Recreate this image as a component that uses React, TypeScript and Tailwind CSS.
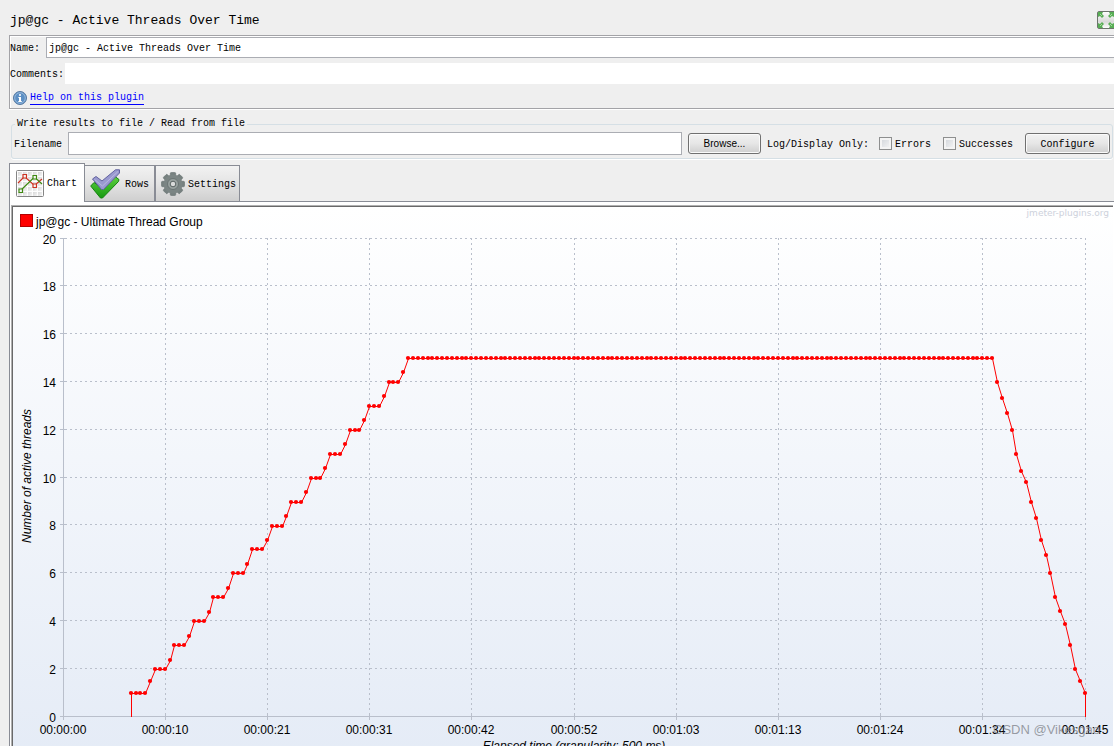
import React from "react";

const MONO = "font-['Liberation_Mono',monospace]";

const STEP = 1022 / 210;
const LEFT = 63;
const BASE = 717;
const UNIT = 23.93;

const rampDown = [14, 13.35, 12.7, 12, 11, 10.3, 9.8, 9, 8.3, 7.4, 6.75, 6, 5, 4.45, 3.9, 3, 2, 1.5, 1];

function threadCounts(): number[] {
  const values = [1, 1, 1, 1, 1.5];
  for (let n = 2; n < 15; n++) values.push(n, n, n, n + 0.4);
  while (values.length < 178) values.push(15);
  return values.concat(rampDown);
}

const points = threadCounts().map((v, i) => ({
  x: Math.floor(LEFT + (i + 14) * STEP + 0.01),
  y: Math.round(BASE - v * UNIT),
}));

const xTicks = [
  { x: 63.5, label: "00:00:00" },
  { x: 165.5, label: "00:00:10" },
  { x: 267.5, label: "00:00:21" },
  { x: 369.5, label: "00:00:31" },
  { x: 471.5, label: "00:00:42" },
  { x: 574.5, label: "00:00:52" },
  { x: 676.5, label: "00:01:03" },
  { x: 778.5, label: "00:01:13" },
  { x: 880.5, label: "00:01:24" },
  { x: 982.5, label: "00:01:34" },
  { x: 1085.5, label: "00:01:45" },
];

const yTicks = [0, 2, 4, 6, 8, 10, 12, 14, 16, 18, 20].map((v) => ({
  label: v,
  y: Math.floor(716 - v * 23.9) + 0.5,
}));

function ThreadsChart() {
  return (
    <svg
      viewBox="13 207 1100 560"
      className="block w-full font-['Liberation_Sans',Arial,sans-serif] text-[12px]"
      role="img"
      aria-label="Active threads over time"
    >
      <defs>
        <linearGradient id="sky" x1="0" y1="0" x2="0" y2="1">
          <stop offset="0" stopColor="#ffffff" />
          <stop offset="1" stopColor="#e4ebf6" />
        </linearGradient>
      </defs>
      <rect x="13" y="207" width="1100" height="560" fill="url(#sky)" />
      <rect x="20.5" y="214.5" width="12" height="12" fill="#ff0000" stroke="#b20000" />
      <text x="36" y="226" fill="#000">jp@gc - Ultimate Thread Group</text>
      <text x="1109" y="216" textAnchor="end" fill="#cdd1dc" className="font-['DejaVu_Sans',sans-serif] text-[9px]">
        jmeter-plugins.org
      </text>

      <g stroke="#b9bfcb" fill="none">
        {yTicks.slice(1).map((t) => (
          <g key={t.label}>
            <path d={`M60 ${t.y}H67`} />
            <path d={`M70 ${t.y}H1085`} strokeDasharray="2 3" />
          </g>
        ))}
        {xTicks.slice(1).map((t) => (
          <g key={t.label}>
            <path d={`M${t.x} 238V713`} strokeDasharray="2 3" />
            <path d={`M${t.x} 713V720`} />
          </g>
        ))}
        <path d="M60 716.5H1086M63.5 238V720" />
      </g>

      <g fill="#000">
        {yTicks.map((t) => (
          <text key={t.label} x="56" y={t.y + 5.5} textAnchor="end">{t.label}</text>
        ))}
        {xTicks.map((t) => (
          <text key={t.label} x={t.x - 0.5} y="734" textAnchor="middle">{t.label}</text>
        ))}
        <text x="574" y="750" textAnchor="middle" fontStyle="italic">Elapsed time (granularity: 500 ms)</text>
        <text transform="translate(31 476) rotate(-90)" textAnchor="middle" fontStyle="italic">
          Number of active threads
        </text>
      </g>

      <path d="M131.5 693V717M1085.5 693V717" stroke="#ff0000" />
      <polyline
        points={points.map((p) => `${p.x + 0.5},${p.y + 0.5}`).join(" ")}
        fill="none"
        stroke="#ff0000"
      />
      <g fill="#ff0000">
        {points.map((p, i) => (
          <circle key={i} cx={p.x} cy={p.y} r="2.1" />
        ))}
      </g>

      <text x="993" y="734" fill="#7c7f86" fillOpacity="0.75" className="text-[13px]">CSDN @Vikesgao</text>
    </svg>
  );
}

function ExpandIcon() {
  return (
    <svg width="17" height="18" viewBox="0 0 17 18">
      <defs>
        <linearGradient id="exp" x1="0" y1="0" x2="0" y2="1">
          <stop offset="0" stopColor="#fff" />
          <stop offset=".6" stopColor="#d9d9d9" />
          <stop offset="1" stopColor="#fff" />
        </linearGradient>
      </defs>
      <rect x=".5" y=".5" width="19" height="17" rx="1.5" fill="url(#exp)" stroke="#6c746c" />
      <g fill="#58ad55">
        <path d="M1 1h5L5 3l2 2-2 2-2-2-2 1zM17 1h-5l1 2-2 2 2 2 2-2 2 1zM1 17h5l-1-2 2-2-2-2-2 2-2-1zM17 17h-5l1-2-2-2 2-2 2 2 2-1z" />
      </g>
      <path d="M3 3L5 5M15 3L13 5M3 15L5 13M15 15L13 13" stroke="#a4d8a0" />
    </svg>
  );
}

function InfoIcon() {
  return (
    <svg width="14" height="14" viewBox="0 0 14 14">
      <circle cx="7" cy="7" r="6.5" fill="#5c8fc4" stroke="#56789f" />
      <circle cx="7" cy="7" r="5.3" fill="none" stroke="#a3c3e3" strokeWidth=".8" />
      <path d="M6 3.2h2v1.6H6zM5.4 6H8v4h.8v1H5.3v-1H6V7h-.6z" fill="#fff" />
    </svg>
  );
}

function ChartIcon() {
  return (
    <svg width="28" height="27" viewBox="0 0 28 27">
      <defs>
        <linearGradient id="paper" x1="0" y1="0" x2="1" y2="1">
          <stop offset="0" stopColor="#d6d6d6" />
          <stop offset="1" stopColor="#f6f6f6" />
        </linearGradient>
      </defs>
      <rect x=".5" y=".5" width="27" height="26" rx="1" fill="#fdfdfd" stroke="#858585" />
      <g fill="url(#paper)">
        {[2, 7, 12, 17, 22].map((y) => [2, 7, 12, 17, 22].map((x) => (
          <rect key={`${x}-${y}`} x={x} y={y} width="4" height="4" />
        )))}
      </g>
      <path d="M2 13L8.500 6.500L18.500 15.500L26 9" fill="none" stroke="#cc3322" strokeWidth="1.2" />
      <path d="M4.500 20.500L18.500 7L26 14" fill="none" stroke="#3f8a12" strokeWidth="1.2" />
      <g fill="#f4f4f4" strokeWidth="1.2">
        <path d="M7 4.500h3.500v3.500H7zM17 14h3.500v3.500H17z" stroke="#cc3322" />
        <path d="M3 19h3.500v3.500H3zM17 5.500h3.500v3.500H17z" stroke="#3f8a12" />
      </g>
    </svg>
  );
}

function ChecksIcon() {
  return (
    <svg width="30" height="30" viewBox="0 0 30 30">
      <defs>
        <linearGradient id="grn" x1="0" y1="0" x2="0" y2="1">
          <stop offset="0" stopColor="#5ed040" />
          <stop offset="1" stopColor="#169a10" />
        </linearGradient>
      </defs>
      <path d="M.7 17L4 13.500L10.500 18L25 7.500L29 10.500L28.500 12.500L12.500 29L10.500 29Z" fill="url(#grn)" stroke="#15830f" strokeLinejoin="round" />
      <path d="M2.500 10L6 7.500L12 12L25.500 .8L29.500 .8V4L13.500 20.500L11.500 20.500Z" fill="#9a9ad0" stroke="#62629f" strokeLinejoin="round" />
      <path d="M4.500 10.500L12.500 17L28 2.500" fill="none" stroke="#b8b8e2" />
    </svg>
  );
}

function GearIcon() {
  return (
    <svg width="24" height="24" viewBox="0 0 24 24">
      <g fill="#76807f" stroke="#667070" strokeWidth=".6">
        {[0, 45, 90, 135].map((a) => (
          <rect key={a} x="9.300" y=".5" width="5.400" height="23" rx="1" transform={`rotate(${a} 12 12)`} />
        ))}
      </g>
      <circle cx="12" cy="12" r="9.5" fill="#7b8584" />
      <circle cx="12" cy="12" r="5.5" fill="#98a19f" stroke="#6a7473" />
      <circle cx="12" cy="12" r="2.8" fill="#d9dbda" stroke="#5a6463" />
    </svg>
  );
}

const tabBase = "flex items-center border border-[#898c95] text-[10px]";
const tabIdle = "h-[37px] bg-linear-to-b from-[#f2f2f2] via-[#e4e4e4] via-50% to-[#cfcfcf]";
const button =
  "h-[21px] shrink-0 rounded-[3px] border border-[#707070] bg-linear-to-b from-[#f2f2f2] via-[#e6e6e6] via-50% to-[#cfcfcf] shadow-[inset_0_0_0_1px_#fafafa]";
const checkbox =
  "size-[13px] shrink-0 appearance-none border border-[#8e8f8f] bg-linear-to-br from-[#cfd3d8] to-[#f8f8f8] shadow-[inset_0_0_0_2px_#f4f4f4] checked:bg-[#4a6fa5]";

export default function App() {
  return (
    <div className={`flex h-screen flex-col overflow-hidden bg-[#efefef] pl-[9px] text-[10px] text-black ${MONO}`}>
      <header className="flex h-[35px] shrink-0 items-center justify-between pt-1">
        <h1 className="pt-0.5 pl-px text-[13px] leading-4">jp@gc - Active Threads Over Time</h1>
        <button type="button" aria-label="Expand all"><ExpandIcon /></button>
      </header>

      <section className="shrink-0 border border-r-0 border-[#a3a3a7] shadow-[inset_1px_1px_0_#fff,0_1px_0_#fff]">
        <div className="flex items-center pt-px">
          <label htmlFor="name" className="w-9 shrink-0 pt-0.5">Name:</label>
          <input
            id="name"
            defaultValue="jp@gc - Active Threads Over Time"
            className="h-[21px] min-w-0 flex-1 border border-r-0 border-[#abadb3] bg-white px-0.5 pt-0.5 outline-none"
          />
        </div>
        <div className="mt-[5px] flex items-center">
          <label htmlFor="comments" className="w-[55px] shrink-0 pt-0.5">Comments:</label>
          <input id="comments" className="h-[21px] min-w-0 flex-1 bg-white px-0.5 pt-0.5 outline-none" />
        </div>
        <div className="flex h-6 items-center gap-[3px] pl-[3px] pt-[3px]">
          <InfoIcon />
          <a href="#help" className="border-b border-[#0000ff] pt-px leading-3 text-[#0000ff]">Help on this plugin</a>
        </div>
      </section>

      <fieldset className="mt-[9px] mr-px ml-0.5 h-[41px] shrink-0 rounded-[3px] border border-[#d5dfe5] px-0.5 shadow-[0_1px_0_#fff]">
        <legend className="ml-px px-0.5 leading-3">Write results to file / Read from file</legend>
        <div className="flex items-center pt-[2px]">
          <label htmlFor="file" className="w-[54px] shrink-0 pt-0.5">Filename</label>
          <input id="file" className="h-[23px] min-w-0 flex-1 border border-[#abadb3] bg-white px-0.5 pt-0.5 outline-none" />
          <button type="button" className={`${button} ml-1.5 w-[73px] font-['Liberation_Sans',Arial,sans-serif] text-[10px]`}>
            Browse...
          </button>
          <span className="ml-1.5 shrink-0 pt-0.5">Log/Display Only:</span>
          <label className="ml-2.5 flex shrink-0 items-center gap-[3px]">
            <input type="checkbox" className={checkbox} />
            <span className="pt-0.5">Errors</span>
          </label>
          <label className="ml-3 flex shrink-0 items-center gap-[3px]">
            <input type="checkbox" className={checkbox} />
            <span className="pt-0.5">Successes</span>
          </label>
          <button type="button" className={`${button} ml-3 w-[85px] pt-0.5`}>Configure</button>
        </div>
      </fieldset>

      <div role="tablist" className="z-10 mt-[4px] flex h-[39px] shrink-0 items-end">
        <button role="tab" aria-selected="true" type="button" className={`${tabBase} h-[39px] w-[76px] gap-[3px] border-b-0 bg-white pl-1.5`}>
          <ChartIcon />
          <span>Chart</span>
        </button>
        <button role="tab" aria-selected="false" type="button" className={`${tabBase} ${tabIdle} w-[70px] gap-[5px] border-l-0 pl-[5px]`}>
          <ChecksIcon />
          <span className="pt-0.5">Rows</span>
        </button>
        <button role="tab" aria-selected="false" type="button" className={`${tabBase} ${tabIdle} w-[85px] gap-[3px] pl-[5px]`}>
          <GearIcon />
          <span className="pt-0.5">Settings</span>
        </button>
        <div className="h-px flex-1 bg-[#898c95]" />
      </div>

      <main className="min-h-0 flex-1 overflow-hidden border-l border-[#898c95] bg-white pt-[3px] pr-px pl-px">
        <div className="border-t border-l border-[#b0b0b0]">
          <div className="border-t border-l border-[#696969]">
            <ThreadsChart />
          </div>
        </div>
      </main>
    </div>
  );
}
